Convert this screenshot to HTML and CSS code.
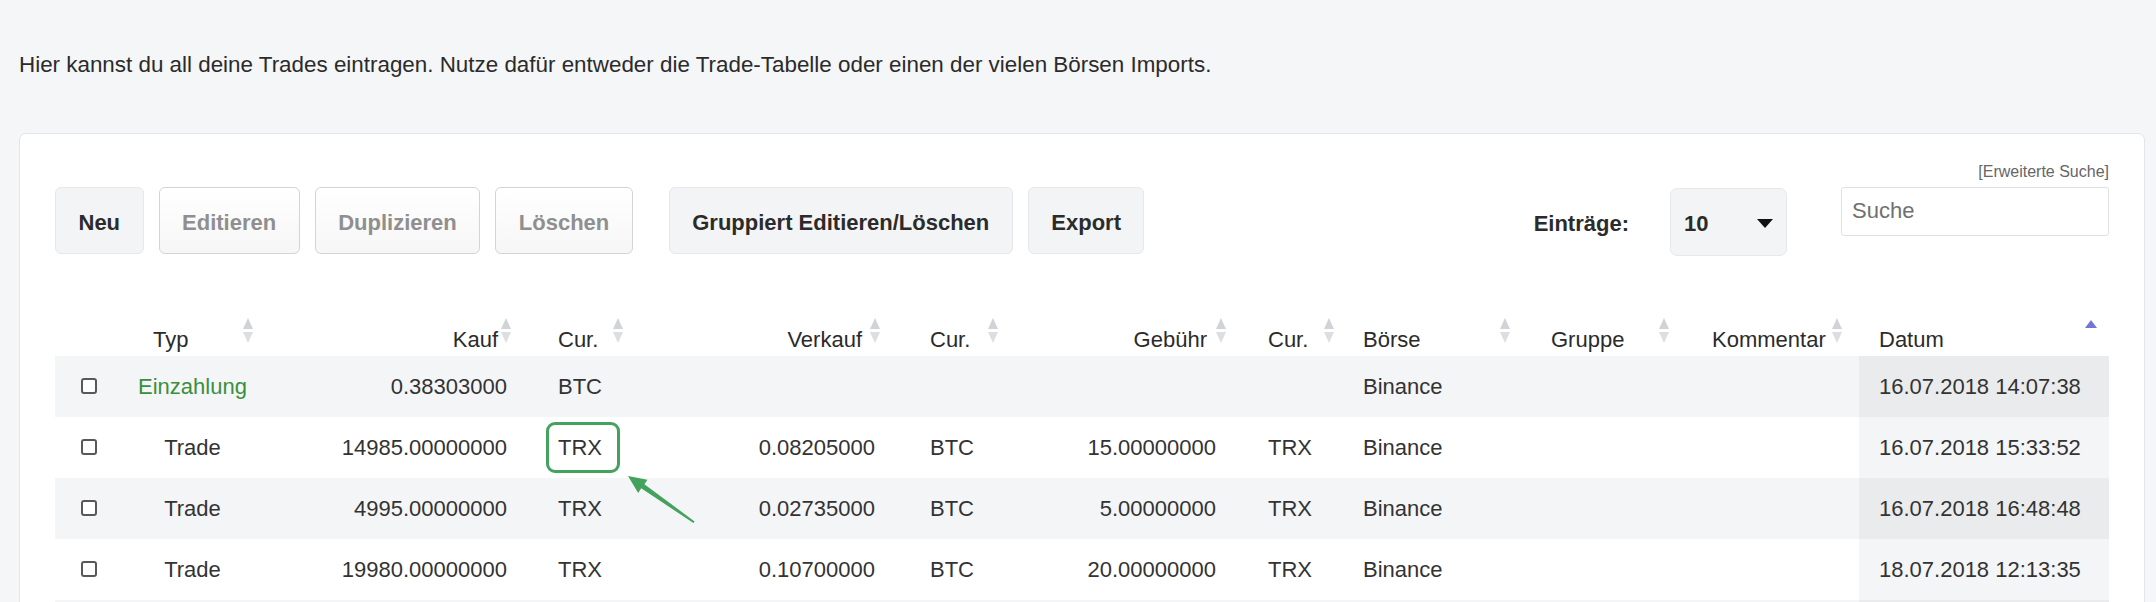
FILE: index.html
```html
<!DOCTYPE html>
<html lang="de">
<head>
<meta charset="utf-8">
<title>Trades</title>
<link rel="stylesheet" href="styles.css">
</head>
<body>
<div class="page">
  <p class="intro">Hier kannst du all deine Trades eintragen. Nutze dafür entweder die Trade-Tabelle oder einen der vielen Börsen Imports.</p>
  <div class="card">
    <div class="toolbar">
      <div class="btns">
        <button class="btn">Neu</button>
        <button class="btn dis">Editieren</button>
        <button class="btn dis">Duplizieren</button>
        <button class="btn dis">Löschen</button>
        <button class="btn sep">Gruppiert Editieren/Löschen</button>
        <button class="btn">Export</button>
      </div>
      <div class="right">
        <div class="len">
          <span class="len-label">Einträge:</span>
          <div class="select"><span>10</span><span class="caret"></span></div>
        </div>
        <div class="search">
          <a class="adv">[Erweiterte Suche]</a>
          <input class="search-input" type="text" placeholder="Suche">
        </div>
      </div>
    </div>
    <table class="trades">
      <colgroup>
        <col class="w-cb"><col class="w-typ"><col class="w-kauf"><col class="w-cur1"><col class="w-verk"><col class="w-cur2"><col class="w-geb"><col class="w-cur3"><col class="w-boerse"><col class="w-gruppe"><col class="w-komm"><col class="w-datum">
      </colgroup>
      <thead>
        <tr class="head">
          <th class="c-cb"></th>
          <th class="c-typ">Typ<span class="sort"></span></th>
          <th class="c-kauf num">Kauf<span class="sort"></span></th>
          <th class="c-cur1">Cur.<span class="sort"></span></th>
          <th class="c-verk num">Verkauf<span class="sort"></span></th>
          <th class="c-cur2">Cur.<span class="sort"></span></th>
          <th class="c-geb num">Gebühr<span class="sort"></span></th>
          <th class="c-cur3">Cur.<span class="sort"></span></th>
          <th class="c-boerse">Börse<span class="sort"></span></th>
          <th class="c-gruppe">Gruppe<span class="sort"></span></th>
          <th class="c-komm">Kommentar<span class="sort"></span></th>
          <th class="c-datum">Datum<span class="sort asc"></span></th>
        </tr>
      </thead>
      <tbody>
        <tr>
          <td class="c-cb"><span class="cb"></span></td>
          <td class="c-typ green">Einzahlung</td>
          <td class="c-kauf num">0.38303000</td>
          <td class="c-cur1">BTC</td>
          <td class="c-verk num"></td>
          <td class="c-cur2"></td>
          <td class="c-geb num"></td>
          <td class="c-cur3"></td>
          <td class="c-boerse">Binance</td>
          <td class="c-gruppe"></td>
          <td class="c-komm"></td>
          <td class="c-datum">16.07.2018 14:07:38</td>
        </tr>
        <tr>
          <td class="c-cb"><span class="cb"></span></td>
          <td class="c-typ">Trade</td>
          <td class="c-kauf num">14985.00000000</td>
          <td class="c-cur1"><span class="hl">TRX<svg class="arrow" width="90" height="60" viewBox="0 0 90 60"><polygon points="10,7 29.4,10.7 26.4,15.3 76.6,52.4 75.4,54 23.2,19.3 20.2,23.9" fill="#43a25c"/></svg></span></td>
          <td class="c-verk num">0.08205000</td>
          <td class="c-cur2">BTC</td>
          <td class="c-geb num">15.00000000</td>
          <td class="c-cur3">TRX</td>
          <td class="c-boerse">Binance</td>
          <td class="c-gruppe"></td>
          <td class="c-komm"></td>
          <td class="c-datum">16.07.2018 15:33:52</td>
        </tr>
        <tr>
          <td class="c-cb"><span class="cb"></span></td>
          <td class="c-typ">Trade</td>
          <td class="c-kauf num">4995.00000000</td>
          <td class="c-cur1">TRX</td>
          <td class="c-verk num">0.02735000</td>
          <td class="c-cur2">BTC</td>
          <td class="c-geb num">5.00000000</td>
          <td class="c-cur3">TRX</td>
          <td class="c-boerse">Binance</td>
          <td class="c-gruppe"></td>
          <td class="c-komm"></td>
          <td class="c-datum">16.07.2018 16:48:48</td>
        </tr>
        <tr>
          <td class="c-cb"><span class="cb"></span></td>
          <td class="c-typ">Trade</td>
          <td class="c-kauf num">19980.00000000</td>
          <td class="c-cur1">TRX</td>
          <td class="c-verk num">0.10700000</td>
          <td class="c-cur2">BTC</td>
          <td class="c-geb num">20.00000000</td>
          <td class="c-cur3">TRX</td>
          <td class="c-boerse">Binance</td>
          <td class="c-gruppe"></td>
          <td class="c-komm"></td>
          <td class="c-datum">18.07.2018 12:13:35</td>
        </tr>
        <tr>
          <td class="c-cb"></td><td class="c-typ"></td><td class="c-kauf num"></td><td class="c-cur1"></td><td class="c-verk num"></td><td class="c-cur2"></td><td class="c-geb num"></td><td class="c-cur3"></td><td class="c-boerse"></td><td class="c-gruppe"></td><td class="c-komm"></td><td class="c-datum"></td>
        </tr>
      </tbody>
    </table>
  </div>
</div>
</body>
</html>
```

FILE: styles.css
```css
html, body {
  margin: 0;
  background: #f5f6f8;
  font-family: "Liberation Sans", Arial, sans-serif;
  color: #2b2b2b;
  overflow: hidden;
}

.page {
  padding: 52px 11px 0 19px;
}

.intro {
  margin: 0;
  font-size: 22.4px;
  line-height: 26px;
  color: #2b2b2b;
}

.card {
  margin-top: 55px;
  background: #fff;
  border: 1px solid #e3e5e8;
  border-radius: 7px;
  padding: 28px 35px 0;
}

.toolbar {
  display: flex;
  justify-content: space-between;
  align-items: flex-start;
}

.btns {
  display: flex;
  gap: 15px;
  margin-top: 25px;
}

.btn {
  height: 67px;
  padding: 4px 22.5px 0;
  font: bold 22px "Liberation Sans", Arial, sans-serif;
  color: #2b2b2b;
  background: #f3f4f6;
  border: 1px solid #e7e8eb;
  border-radius: 6px;
}

.btn.dis {
  color: #8f8f8f;
  background: linear-gradient(#ffffff, #f6f6f6);
  border-color: #d3d4d6;
}

.btn.sep {
  margin-left: 21px;
}

.right {
  display: flex;
  align-items: flex-start;
}

.len {
  display: flex;
  align-items: center;
  margin-top: 26px;
}

.len-label {
  font-weight: bold;
  font-size: 22px;
  margin-right: 41px;
  padding-top: 3px;
}

.select {
  width: 117px;
  height: 68px;
  box-sizing: border-box;
  background: #f3f4f6;
  border: 1px solid #e7e8eb;
  border-radius: 7px;
  display: flex;
  align-items: center;
  justify-content: space-between;
  padding: 3px 13px 0;
  font-weight: bold;
  font-size: 22px;
}

.caret {
  width: 0;
  height: 0;
  border-left: 8px solid transparent;
  border-right: 8px solid transparent;
  border-top: 9px solid #111;
}

.search {
  margin-left: 54px;
  display: flex;
  flex-direction: column;
  align-items: flex-end;
}

.adv {
  font-size: 16px;
  line-height: 20px;
  color: #666;
  margin-bottom: 5px;
}

.search-input {
  width: 268px;
  height: 49px;
  box-sizing: border-box;
  border: 1px solid #dfe1e4;
  border-radius: 3px;
  padding: 0 10px 1px;
  font: 22px "Liberation Sans", Arial, sans-serif;
  color: #333;
  background: #fff;
}

.search-input::placeholder {
  color: #707070;
}

/* table */
.trades {
  width: 100%;
  border-collapse: collapse;
  table-layout: fixed;
  margin-top: 40px;
  font-size: 22px;
  line-height: 26px;
}

.w-cb { width: 68px; }
.w-typ { width: 139px; }
.w-kauf { width: 276px; }
.w-cur1 { width: 102px; }
.w-verk { width: 270px; }
.w-cur2 { width: 105px; }
.w-geb { width: 233px; }
.w-cur3 { width: 95px; }
.w-boerse { width: 188px; }
.w-gruppe { width: 161px; }
.w-komm { width: 167px; }
.w-datum { width: 250px; }

.trades tr { height: 61px; }
.trades tr.head { height: 60px; }

.trades th {
  font-weight: normal;
  text-align: left;
  vertical-align: bottom;
  padding: 0 0 3px 20px;
  position: relative;
  color: #2b2b2b;
  white-space: nowrap;
}

.trades td {
  padding: 0 0 0 20px;
  vertical-align: middle;
  color: #333;
  white-space: nowrap;
}

.trades tbody tr:nth-child(odd) { background: #f4f5f7; }
.trades tbody tr:nth-child(odd) td.c-datum { background: #eaebed; }
.trades tbody tr:nth-child(even) td.c-datum { background: #f4f5f7; }

.trades .c-cb { text-align: center; padding: 0; }
.trades td.c-typ { text-align: center; padding: 0; }
.trades th.c-typ { padding-left: 30px; }

.trades .num { text-align: right; padding-left: 0; }
.trades td.c-kauf { padding-right: 31px; }
.trades th.c-kauf { padding-right: 40px; }
.trades td.c-verk { padding-right: 35px; }
.trades th.c-verk { padding-right: 48px; }
.trades td.c-geb { padding-right: 32px; }
.trades th.c-geb { padding-right: 41px; }

.green { color: #3a8f3c !important; }

/* sort icons */
.sort {
  position: absolute;
  top: 22px;
  width: 11px;
  height: 25px;
}

.sort::before,
.sort::after {
  content: "";
  position: absolute;
  left: 0;
  width: 0;
  height: 0;
  border-left: 5.5px solid transparent;
  border-right: 5.5px solid transparent;
}

.sort::before {
  top: 0;
  border-bottom: 11px solid #d2d3d6;
}

.sort::after {
  bottom: 0;
  border-top: 11px solid #dddee0;
}

.sort.asc {
  top: 24px;
  width: 12px;
  height: 8px;
}

.sort.asc::before {
  border-left-width: 6px;
  border-right-width: 6px;
  border-bottom: 8px solid #7276d8;
}

.sort.asc::after { display: none; }

.c-typ .sort { right: 8px; }
.c-kauf .sort { right: 26px; }
.c-cur1 .sort { right: 16px; }
.c-verk .sort { right: 29px; }
.c-cur2 .sort { right: 16px; }
.c-geb .sort { right: 21px; }
.c-cur3 .sort { right: 8px; }
.c-boerse .sort { right: 20px; }
.c-gruppe .sort { right: 22px; }
.c-komm .sort { right: 16px; }
.c-datum .sort { right: 12px; }

/* checkbox */
.cb {
  display: inline-block;
  width: 16px;
  height: 16px;
  box-sizing: border-box;
  border: 2px solid #585858;
  border-radius: 3px;
  background: #fff;
  vertical-align: middle;
  position: relative;
  top: -2px;
}

/* highlight + arrow */
.hl {
  position: relative;
  display: inline-block;
}

.hl::before {
  content: "";
  position: absolute;
  left: -12px;
  right: -18px;
  top: -13px;
  bottom: -12px;
  border: 3px solid #43a25c;
  border-radius: 9px;
}

.arrow {
  position: absolute;
  left: 60px;
  top: 34px;
}
```
